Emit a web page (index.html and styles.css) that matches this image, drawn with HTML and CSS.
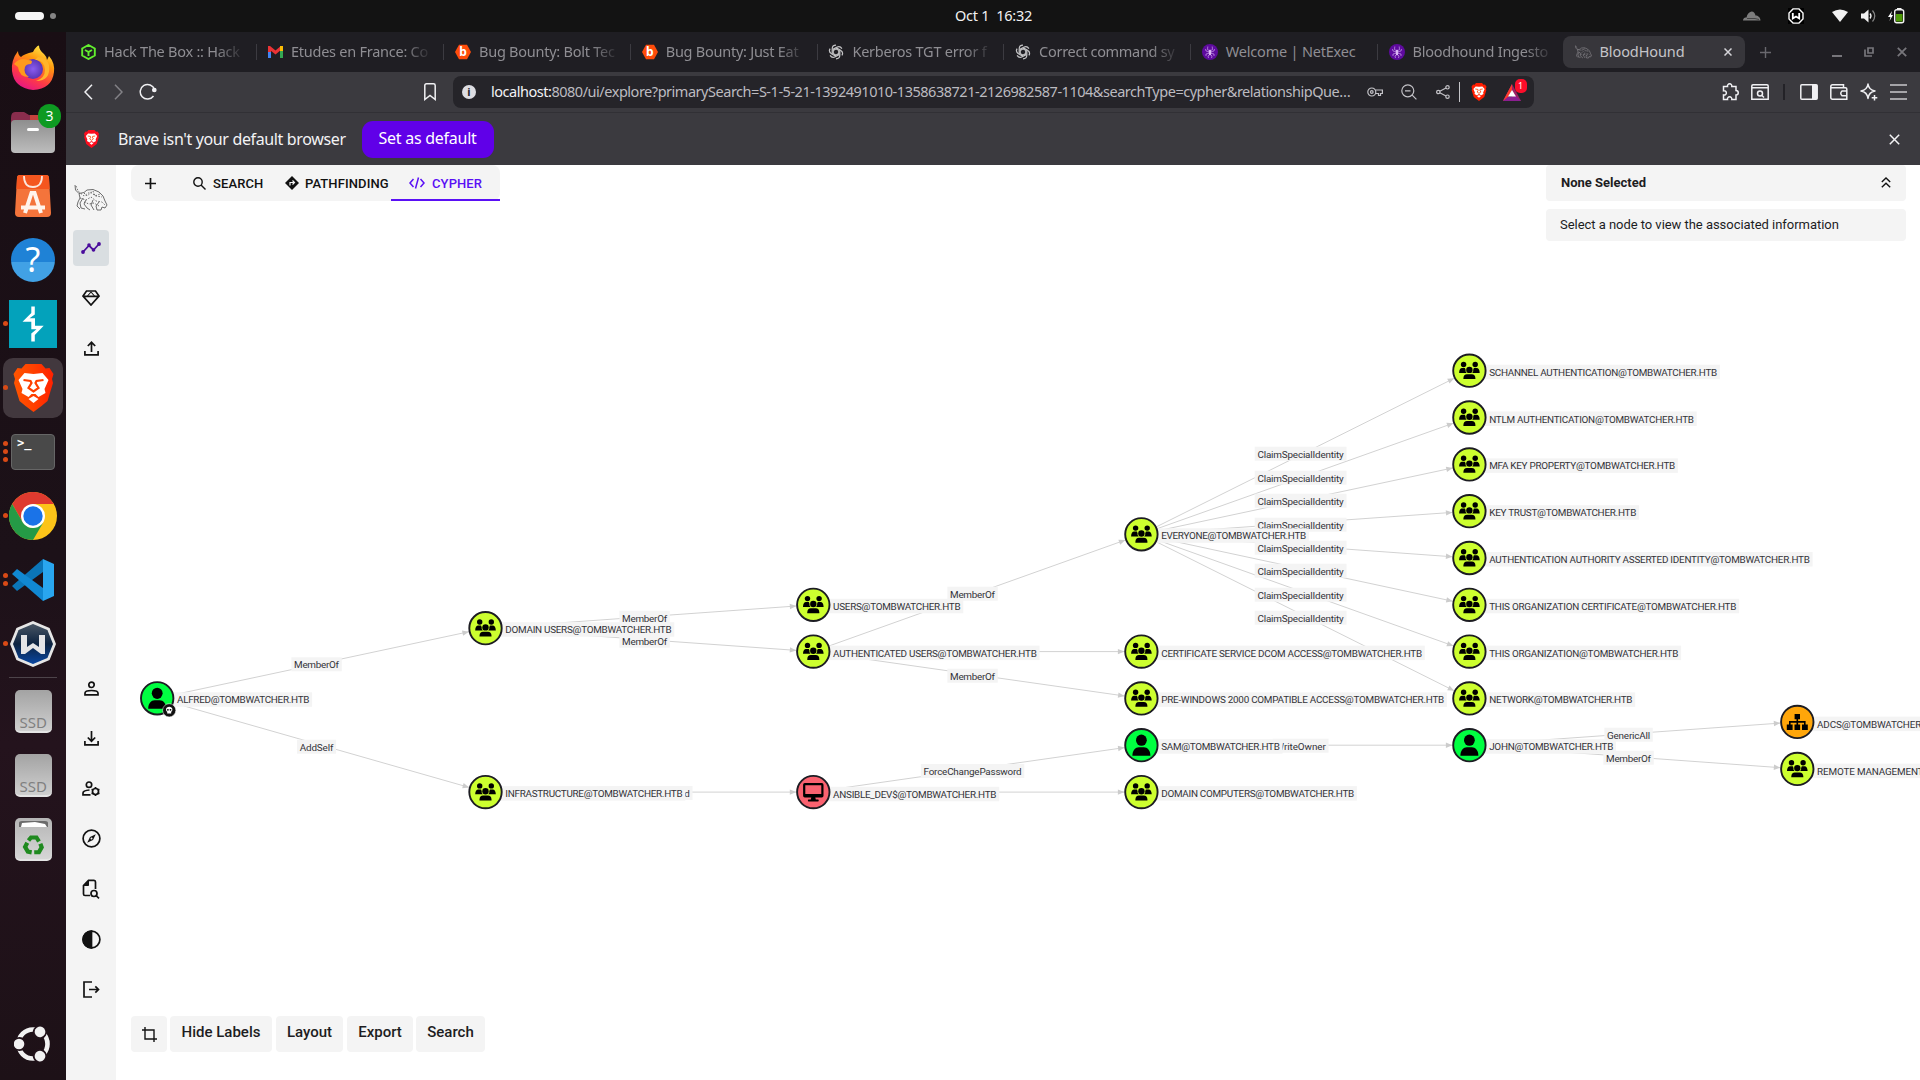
FILE: index.html
```
<!DOCTYPE html>
<html lang="en">
<head>
<meta charset="utf-8">
<title>BloodHound</title>
<link rel="stylesheet" href="styles.css">
</head>
<body>
<svg class="defs" width="0" height="0">
  <defs>
    <linearGradient id="ffBody" x1="0.8" y1="0" x2="0.3" y2="1"><stop offset="0" stop-color="#fff44f"/><stop offset=".35" stop-color="#ff980e"/><stop offset=".7" stop-color="#ff3b45"/><stop offset="1" stop-color="#e31587"/></linearGradient>
    <radialGradient id="ffGlobe"><stop offset="0" stop-color="#8a5cf0"/><stop offset="1" stop-color="#5a35b5"/></radialGradient>
    <linearGradient id="grey" x1="0" y1="0" x2="0" y2="1"><stop offset="0" stop-color="#8e8e8e"/><stop offset="1" stop-color="#bdbdbd"/></linearGradient>
    <linearGradient id="brave" x1="0" y1="0" x2="1" y2="0"><stop offset="0" stop-color="#ff5500"/><stop offset=".5" stop-color="#ff4000"/><stop offset="1" stop-color="#ff2000"/></linearGradient>
    <linearGradient id="wind" x1="0" y1="0" x2="0" y2="1"><stop offset="0" stop-color="#4c5866"/><stop offset=".5" stop-color="#0d2340"/><stop offset="1" stop-color="#0848a8"/></linearGradient>
    <symbol id="lion" viewBox="0 0 40 48"><path d="M12 0H28L32 4.500L36 4L40 10L38.500 15L39.500 19L34 37L28 42L20 48L12 42L6 37L.5 19L1.500 15L0 10L4 4L8 4.500Z"/><path class="face" d="M11 9L20 10L29 9L35 16L31 25L32 29L25 33L22 30H18L15 33L8 29L9 25L5 16ZM15 35L20 32L25 35L20 39Z"/><path class="mane" d="M10 16L17 17L18 19L15 24L20 27.500L25 24L22 19L23 17L30 16" /></symbol>
    <symbol id="hound" viewBox="0 0 34 28"><g fill="none" stroke="currentColor" stroke-width=".8"><path d="M1 1L1.500 6L5 9.500L10 8.500L13 6L19 5.500L25 8L29 12L31 17L33 21L31 24L28 23L27 26L23 26M5 9.500L6 14L4 18L3 22L6 25M9 14L6 19L7 24L11 25M12 16L10 20L13 24L16 26M19 16L17 21L20 26M25 18L22 22L23 26"/><path stroke-dasharray="1.500 1.500" d="M2 2L4 7L10 12L16 8L22 12L28 13M6 14L12 16L17 13L22 17L28 18L31 21M10 9L13 12L19 7L21 12L26 10M10 18L15 20L20 19L25 22"/></g></symbol>
    <symbol id="gpt" viewBox="0 0 16 16"><g fill="none" stroke="#c4c4c6" stroke-width="1.200"><path id="petal" d="M8 1.200C4.800 1.200 4.200 3.600 4.200 5V9L8 11.200"/><use href="#petal" transform="rotate(60 8 8)"/><use href="#petal" transform="rotate(120 8 8)"/><use href="#petal" transform="rotate(180 8 8)"/><use href="#petal" transform="rotate(240 8 8)"/><use href="#petal" transform="rotate(300 8 8)"/></g></symbol>
    <symbol id="spider" viewBox="0 0 16 16"><circle cx="8" cy="8" r="8" fill="#5e0a9e"/><ellipse cx="8" cy="8.500" rx="1.300" ry="3" fill="#dcb8f5"/><path d="M8 7L5.500 5.500L5.800 2.500M8 7L10.500 5.500L10.200 2.500M8 8L4 7L3.500 5M8 8L12 7L12.500 5M8 9L4 10L4 12M8 9L12 10L12 12M8 10L6 12L6.500 14M8 10L10 12L9.500 14" fill="none" stroke="#dcb8f5" stroke-width=".6"/></symbol>
    <symbol id="hex" viewBox="0 0 16 16"><path d="M4 .8H12L16 8L12 15.200H4L0 8Z" fill="#ff4c0a"/></symbol>
  </defs>
</svg>

<div class="desktop">
  <header class="topbar">
    <div class="workspaces"><i class="pill"></i><i class="dot"></i></div>
    <div class="clock">Oct 1&nbsp; 16:32</div>
    <div class="tray">
      <svg width="18" height="12" viewBox="0 0 18 12"><path d="M0 10.500C0 8 2 7.500 3.500 7.500C4 4 6 2 8.500 1.500C11 1.500 12 3.500 12.500 5.500C15 5.500 17.500 7.500 17.500 10.500Z" fill="#7d7d7d"/><path d="M4 8.500H12L16 9.500" stroke="#444" fill="none"/></svg>
      <svg class="t-w" width="16" height="16" viewBox="0 0 16 16"><rect width="16" height="16" fill="#000"/><path d="M5 .9H11L15 5V11L11 15.100H5L1 11V5Z" fill="none" stroke="#fff" stroke-width="1.400"/><path d="M4.800 5V10.500L8 8.500L11.200 10.500V5" fill="none" stroke="#fff" stroke-width="1.800"/></svg>
      <svg class="t-wifi" width="16" height="14" viewBox="0 0 16 14"><path d="M0 3Q8-2 16 3L8 13Z" fill="#f2f2f2"/></svg>
      <svg class="t-vol" width="16" height="14" viewBox="0 0 16 14"><path d="M0 4.500H3L7.500.5V13.500L3 9.500H0Z" fill="#f2f2f2"/><path d="M9 4.500Q11 7 9 9.500" fill="none" stroke="#f2f2f2" stroke-width="1.300"/><path d="M11.500 1.500Q16 7 11.500 12.500" fill="none" stroke="#888" stroke-width="1.200"/></svg>
      <svg class="t-bat" width="17" height="16" viewBox="0 0 17 16"><path d="M4 3L0 9H2.500L1.500 13L5 7H3Z" fill="#fff"/><rect x="6.700" y="1.700" width="9" height="13" rx="2" fill="none" stroke="#f2f2f2" stroke-width="1.400"/><rect x="9" y="0" width="4.500" height="2" fill="#f2f2f2"/><rect x="8" y="6" width="6.500" height="7.500" fill="#4e9a06"/></svg>
    </div>
  </header>

  <div class="work">
    <nav class="dock">
      <div class="slot"><svg width="44" height="46" viewBox="0 0 44 46"><path d="M22 7Q25 1 28 .5Q28 5 33 9Q36 12 36 15L38 11Q44 18 43 27Q41 44 22 45Q3 43 1 26Q0 15 7 6Q7 10 10 12Q13 9 22 7Z" fill="url(#ffBody)"/><circle cx="22" cy="24" r="10" fill="url(#ffGlobe)"/><path d="M3 19Q9 12 17 15Q23 15 20 19Q15 19 14 22Q12 28 18 32Q8 32 7 22Z" fill="#ff9a1c"/><path d="M24 15Q33 14 34 25Q34 33 25 36Q40 36 38 20Q35 12 27 12Z" fill="#ffb52b"/></svg></div>
      <div class="slot"><svg width="46" height="44" viewBox="0 0 46 44"><path d="M1 8Q1 2 5 2H14L19 5H38Q43 5 43 10V20H1Z" fill="#8a2d4d"/><path d="M20 5H38V12H20Z" fill="#c4423c"/><rect x="1" y="10" width="44" height="33" rx="4" fill="url(#grey)"/><rect x="17" y="18" width="12" height="3" rx="1.500" fill="#fff"/></svg><b class="badge">3</b></div>
      <div class="slot"><svg width="36" height="42" viewBox="0 0 36 42"><path d="M5 0H31Q34 0 34 3L36 38Q36 42 32 42H4Q0 42 0 38L2 3Q2 0 5 0Z" fill="#f4743b"/><path d="M5 0H31Q34 0 34 3L34.600 14H1.400L2 3Q2 0 5 0Z" fill="#f4561f"/><path d="M9 1Q9 12 18 12Q27 12 27 1" fill="none" stroke="#fbe6dc" stroke-width="1.800"/><path d="M10 38L16.500 18H19.500L26 38M6 32.500H30" fill="none" stroke="#fff4ec" stroke-width="4"/></svg></div>
      <div class="slot"><div class="help">?</div></div>
      <div class="slot r1"><svg width="48" height="48" viewBox="0 0 48 48"><rect width="48" height="48" fill="#03a2bb"/><path d="M22.300 6.500H25.800V14.500L20.500 18.300H26V25.700H34.700L25.800 35V41.500H22.300V33.500L27.500 29.200H22.300V21.700H13.500L22.300 13Z" fill="#fff"/></svg></div>
      <div class="slot r1"><div class="running"><svg class="lion" width="41" height="48"><use href="#lion"/></svg></div></div>
      <div class="slot r3"><i class="mid"></i><div class="term">&gt;_</div></div>
      <div class="slot r1"><svg width="48" height="48" viewBox="0 0 48 48"><circle cx="24" cy="24" r="24" fill="#fcc419"/><path d="M3.200 12A24 24 0 0 1 44.800 12H24L13.600 30Z" fill="#df3a2f"/><path d="M3.200 12L13.600 30Q18 36 24 36L34 31L24 48A24 24 0 0 1 3.200 12Z" fill="#259a46"/><circle cx="24" cy="24" r="12" fill="#fff"/><circle cx="24" cy="24" r="9.700" fill="#1a73e8"/></svg></div>
      <div class="slot r2"><svg width="42" height="42" viewBox="0 0 42 42"><path d="M31 0L42 5V37L31 42Z" fill="#29a6ef"/><path d="M0 27L31 0V13L5 32Z" fill="#0b75b8"/><path d="M5 10L31 29V42L0 15Z" fill="#1188d2"/></svg></div>
      <div class="slot r1"><svg width="46" height="46" viewBox="0 0 46 46"><path d="M23 1.500L38.500 8L44.500 23L38.500 38L23 44.500L7.500 38L1.500 23L7.500 8Z" fill="url(#wind)" stroke="#e6e6e6" stroke-width="2.800"/><path d="M11 14H17V26L23 22L29 26V14H35V33H31L23 27L15 33H11Z" fill="#e4e4e6"/></svg></div>
      <hr>
      <div class="slot"><div class="disk">SSD</div></div>
      <div class="slot"><div class="disk">SSD</div></div>
      <div class="slot"><div class="disk trash"><svg width="37" height="43" viewBox="0 0 37 43"><path d="M4 9V5Q4 3 7 3H30Q33 3 33 5V9Z" fill="#6b6b6b"/><path d="M6 9L7 5L20 4L30 6L32 9Z" fill="#fff"/><g fill="none" stroke="#1f8a1f" stroke-width="4.200"><path d="M13.500 22.500L16 19.500H21.500L24 23.500"/><path d="M13.500 22.500L16 19.500H21.500L24 23.500" transform="rotate(120 18.500 27.500)"/><path d="M13.500 22.500L16 19.500H21.500L24 23.500" transform="rotate(240 18.500 27.500)"/></g></svg></div></div>
      <div class="slot last"><svg width="38" height="36" viewBox="-19 -18 38 36"><circle r="14.500" fill="none" stroke="#f2f2f2" stroke-width="4.600"/><g id="friend"><circle cx="-13.500" r="7" fill="#21121a"/><circle cx="-14" r="5.300" fill="#f2f2f2"/></g><use href="#friend" transform="rotate(120)"/><use href="#friend" transform="rotate(240)"/></svg></div>
    </nav>

    <main class="browser">
      <div class="tabs">
        <div class="tab"><svg width="15" height="16" viewBox="0 0 15 16"><path d="M7.500 1L13.800 4.500V11.500L7.500 15L1.200 11.500V4.500ZM4 6L7.500 8L11 6M7.500 8V12" fill="none" stroke="#62ef2e" stroke-width="1.900"/></svg><span>Hack The Box :: Hack</span></div>
        <div class="tab"><svg width="15" height="12" viewBox="0 0 15 12"><path d="M1.500 12V2" stroke="#4285f4" stroke-width="3"/><path d="M13.500 12V2" stroke="#34a853" stroke-width="3"/><path d="M1.500 6V1.500L7.500 6.500L13.500 1.500" fill="none" stroke="#ea3335" stroke-width="3"/><path d="M13.500 5V0" stroke="#fbbc04" stroke-width="3"/></svg><span>Etudes en France: Co</span></div>
        <div class="tab"><i class="hexed"><svg width="16" height="16"><use href="#hex"/></svg><b>b</b></i><span>Bug Bounty: Bolt Tec</span></div>
        <div class="tab"><i class="hexed"><svg width="16" height="16"><use href="#hex"/></svg><b>b</b></i><span>Bug Bounty: Just Eat</span></div>
        <div class="tab"><svg width="16" height="16"><use href="#gpt"/></svg><span>Kerberos TGT error f</span></div>
        <div class="tab"><svg width="16" height="16"><use href="#gpt"/></svg><span class="tight">Correct command sy</span></div>
        <div class="tab"><svg width="16" height="16"><use href="#spider"/></svg><span class="full">Welcome | NetExec</span></div>
        <div class="tab nosep"><svg width="16" height="16"><use href="#spider"/></svg><span>Bloodhound Ingesto</span></div>
        <div class="tab active"><svg class="hd" width="17" height="20"><use href="#hound"/></svg><span class="full">BloodHound</span><svg class="x" width="8" height="8" viewBox="0 0 8 8"><path d="M.5.5L7.500 7.500M7.500.5L.5 7.500"/></svg></div>
        <svg class="plus" width="11" height="11" viewBox="0 0 11 11"><path d="M5.500 0V11M0 5.500H11"/></svg>
        <div class="winctl">
          <svg width="10" height="10" viewBox="0 0 10 10"><path d="M0 9H10" stroke-width="2"/></svg>
          <svg width="10" height="10" viewBox="0 0 10 10"><path d="M4 1H9V6H4ZM1 2.500V9H8" stroke-width="1.700"/></svg>
          <svg width="10" height="10" viewBox="0 0 10 10"><path d="M.8.8L9.200 9.200M9.200.8L.8 9.200" stroke-width="1.800"/></svg>
        </div>
      </div>

      <div class="toolbar">
        <svg class="ic" width="9" height="16" viewBox="0 0 9 16"><path d="M8 .8L1 8L8 15.200"/></svg>
        <svg class="ic fwd" width="9" height="16" viewBox="0 0 9 16"><path d="M1 .8L8 8L1 15.200"/></svg>
        <svg class="ic reload" width="18" height="18" viewBox="0 0 18 18"><path d="M14.500 13A7.300 7.300 0 1 1 15.500 6.500"/><circle cx="15.300" cy="7" r="1.600" fill="#f0f0f3"/></svg>
        <svg class="ic mark" width="12" height="18" viewBox="0 0 12 18"><path d="M.8 2.500Q.8.8 2.500.8H9.500Q11.200.8 11.200 2.500V16.500L6 12.500L.8 16.500Z"/></svg>
        <div class="url">
          <i class="info">i</i>
          <span class="addr"><em>localhost:</em>8080/ui/explore?primarySearch=S-1-5-21-1392491010-1358638721-2126982587-1104&amp;searchType=cypher&amp;relationshipQue…</span>
          <svg class="u" width="16" height="10" viewBox="0 0 16 10"><circle cx="4.800" cy="5" r="4"/><circle cx="4.800" cy="5" r="1.300"/><path d="M8.500 3H15.400V6.500H13.500V8.500H11.500V6.500H8.500"/></svg>
          <svg class="u zoom" width="16" height="16" viewBox="0 0 16 16"><circle cx="6.800" cy="6.800" r="6"/><path d="M11.200 11.200L15.400 15.400M4 6.800H9.500"/></svg>
          <svg class="u share" width="14" height="14" viewBox="0 0 14 14"><circle cx="2.300" cy="7" r="1.700"/><circle cx="11.500" cy="2.300" r="1.700"/><circle cx="11.500" cy="11.700" r="1.700"/><path d="M3.800 6.200L10 3M3.800 7.800L10 11"/></svg>
          <i class="bar"></i>
          <svg class="lion small" width="16" height="18"><use href="#lion"/></svg>
          <div class="bat"><svg width="18" height="17" viewBox="0 0 18 17"><path d="M9 0L18 17H9Z" fill="#9c1f63"/><path d="M9 0L0 17H18L13 12L5 13L9 5Z" fill="#8b1f90"/><path d="M9 0L0 17L6 12L9 6Z" fill="#ff3b2a"/><path d="M9 6L13 12.500H5Z" fill="#fff"/></svg><b>1</b></div>
        </div>
        <svg class="ic puzzle" width="18" height="18" viewBox="0 0 18 18"><path d="M1.500 3.500H5.500A2.200 2.200 0 1 1 9.800 3.500H14V7.500A2.200 2.200 0 1 1 14 12V16.500H9.800A2.200 2.200 0 1 0 5.500 16.500H1.500V12A2.200 2.200 0 1 0 1.500 7.800Z"/></svg>
        <svg class="ic g1" width="18" height="16" viewBox="0 0 18 16"><path d="M2 .8H16Q17.200.8 17.200 2V15.200H.8V2Q.8.8 2 .8ZM.8 3.800H17.200M11 11.500L13 13.500"/><circle cx="9" cy="9.500" r="2.500"/></svg>
        <i class="div"></i>
        <svg class="ic" width="18" height="16" viewBox="0 0 18 16"><rect x=".8" y=".8" width="16.400" height="14.400" rx="1"/><rect x="12" y="1" width="5" height="14" fill="#f0f0f3" stroke="none"/></svg>
        <svg class="ic g2" width="18" height="16" viewBox="0 0 18 16"><path d="M.8 2.500Q.8.8 2.500.8H13.500V3.500M.8 2.500Q.8 3.800 2.500 3.800H15.500Q16.800 3.800 16.800 5V15.200H2.500Q.8 15.200.8 13.500ZM16.800 7H12Q9.500 9.300 12 11.800H16.800"/></svg>
        <svg class="ic g3" width="18" height="18" viewBox="0 0 18 18"><path d="M8 1Q8.800 7 15 8Q8.800 9 8 15.500Q7.200 9 1 8Q7.200 7 8 1ZM14.500 12V17.500M11.700 14.700H17.300" stroke-linejoin="round"/></svg>
        <svg class="ic g4" width="17" height="16" viewBox="0 0 17 16"><path d="M0 1H17M0 8H17M0 15H17"/></svg>
      </div>

      <div class="infobar">
        <svg class="lion red" width="15" height="18"><use href="#lion"/></svg>
        <span class="msg">Brave isn't your default browser</span>
        <button class="setdef">Set as default</button>
        <svg class="close" width="11" height="11" viewBox="0 0 11 11"><path d="M.8.8L10.200 10.200M10.200.8L.8 10.200"/></svg>
      </div>

      <div class="page">
        <aside class="side">
          <div class="cell"><svg width="34" height="28"><use href="#hound"/></svg></div>
          <div class="cell"><div class="on"><svg width="20" height="12" viewBox="0 0 20 12"><path d="M2 10L8 3.500L12.500 8L18 2" fill="none" stroke="#4a0c9c" stroke-width="1.800"/><g fill="#4a0c9c"><circle cx="2" cy="10" r="1.900"/><circle cx="8" cy="3" r="1.800"/><circle cx="12.500" cy="8" r="1.800"/><circle cx="18" cy="2" r="1.900"/></g></svg></div></div>
          <div class="cell"><svg class="s" width="18" height="16" viewBox="0 0 18 16"><path d="M4.500 1H13.500L17 6L9 15L1 6ZM1 6.300H17"/><path stroke-width="1.100" d="M5.500 6L9 2L12.500 6"/></svg></div>
          <div class="cell"><svg class="s" width="15" height="15" viewBox="0 0 15 15"><path d="M.9 10V13.900H14.100V10M7.500 11V1.500M3.800 5L7.500 1.300L11.200 5"/></svg></div>
          <div class="cell low"><svg class="s" width="15" height="15" viewBox="0 0 15 15"><circle cx="7.500" cy="3.800" r="2.700"/><path d="M1 13.800V12Q1 9.500 7.500 9.500Q14 9.500 14 12V13.800Z"/></svg></div>
          <div class="cell"><svg class="s" width="15" height="15" viewBox="0 0 15 15"><path d="M.9 10V13.900H14.100V10M7.500 0V10M3.800 6.500L7.500 10.200L11.200 6.500"/></svg></div>
          <div class="cell"><svg class="s" width="18" height="15" viewBox="0 0 18 15"><circle cx="7" cy="3.700" r="2.700"/><path d="M8.500 13.900H1V12Q1 9.500 7.500 9"/><circle cx="13.500" cy="10.500" r="3"/><path d="M13.500 6V7.500M13.500 13.500V15M9.600 8.300L11 9M16 12L17.400 12.700M17.400 8.300L16 9M11 12L9.600 12.700"/></svg></div>
          <div class="cell"><svg class="s" width="19" height="19" viewBox="0 0 19 19"><circle cx="9.500" cy="9.500" r="8.400"/><path d="M13.800 5.200L11 11L5.200 13.800L8 8Z" fill="#121212" stroke="none"/><circle cx="9.500" cy="9.500" r="1" fill="#f4f4f4" stroke="none"/></svg></div>
          <div class="cell"><svg class="s" width="18" height="20" viewBox="0 0 18 20"><path d="M8 16.500H3Q1.500 16.500 1.500 15V6.500L6.500 1.300H12Q13.500 1.300 13.500 3V10"/><path d="M2 6.500L6.500 2V6.500Z" fill="#121212" stroke-width="1"/><circle cx="12" cy="14.500" r="3"/><path d="M14 16.500L17 19.300"/></svg></div>
          <div class="cell"><svg class="s" width="19" height="19" viewBox="0 0 19 19"><circle cx="9.500" cy="9.500" r="8.400"/><path d="M9.500 1A8.500 8.500 0 0 0 9.500 18Z" fill="#121212"/></svg></div>
          <div class="cell"><svg class="s" width="17" height="17" viewBox="0 0 17 17"><path d="M9 1H1V16H9M6 8.500H15.500M12.300 5.300L15.500 8.500L12.300 11.700"/></svg></div>
        </aside>

        <section class="explore">
          <svg id="graph" class="graph" viewBox="116 165 1804 915" width="1804" height="915"></svg>
          <div class="head">
            <div class="modes">
              <svg class="s" width="11" height="11" viewBox="0 0 11 11"><path d="M5.500 0V11M0 5.500H11"/></svg>
              <span class="mode m1"><svg class="s thin" width="13" height="13" viewBox="0 0 13 13"><circle cx="5" cy="5" r="4.200"/><path d="M8 8L12.500 12.500"/></svg>SEARCH</span>
              <span class="mode m2"><svg width="14" height="14" viewBox="0 0 14 14"><path d="M7 0L14 7L7 14L0 7Z" fill="#111"/><path d="M5 9.500V6.500H9M7.500 4.500L9.500 6.500L7.500 8.500" fill="none" stroke="#f4f4f4" stroke-width="1.200"/></svg>PATHFINDING</span>
              <span class="mode m3"><svg width="16" height="12" viewBox="0 0 16 12"><path d="M4.500 2L1 6L4.500 10M11.500 2L15 6L11.500 10M9.500.5L6.500 11.500" fill="none" stroke="#5a10f5" stroke-width="1.500"/></svg>CYPHER</span>
            </div>
            <div class="inspect">
              <div class="panel title"><b>None Selected</b><svg class="s thin" width="10" height="11" viewBox="0 0 10 11"><path d="M.8 5L5 1L9.200 5M.8 10.300L5 6.300L9.200 10.300"/></svg></div>
              <div class="panel note">Select a node to view the associated information</div>
            </div>
          </div>
          <div class="controls">
            <button class="crop"><svg class="s thin" width="15" height="15" viewBox="0 0 15 15"><path d="M0 3H12V15M3 0V12H15"/></svg></button><button>Hide Labels</button><button class="c3">Layout</button><button class="c4">Export</button><button class="c5">Search</button>
          </div>
        </section>
      </div>
    </main>
  </div>
</div>
<script src="graph.js"></script>
</body>
</html>
```
FILE: styles.css
```
* { box-sizing: border-box; }
body { margin: 0; width: 1920px; height: 1080px; overflow: hidden; background: #fff; font-family: Roboto, "Liberation Sans", sans-serif; }
.defs { position: absolute; }
svg { display: block; flex: none; }
button { border: 0; font: inherit; }
i, em { font-style: normal; }

.desktop { display: flex; flex-direction: column; height: 1080px; }
.topbar { height: 32px; background: #131313; color: #f2f2f2; display: grid; grid-template-columns: 1fr auto 1fr; align-items: center; font: 14.5px "Noto Sans", sans-serif; }
.workspaces { display: flex; align-items: center; gap: 6px; padding-left: 15px; }
.pill { width: 29px; height: 8px; border-radius: 4px; background: #f6f6f6; }
.dot { width: 6px; height: 6px; border-radius: 3px; background: #858585; }
.clock { position: relative; left: 33.500px; margin-top: -3px; letter-spacing: -.25px; }
.tray { display: flex; align-items: center; justify-content: flex-end; padding-right: 15px; }
.t-w { margin-left: 27px; }
.t-wifi { margin-left: 28px; }
.t-vol { margin-left: 13px; }
.t-bat { margin-left: 11px; }

.work { flex: 1; display: flex; min-height: 0; }
.dock { width: 66px; background: linear-gradient(#190e14, #1c1118 50%, #24131d 68%, #1d1117); padding: 4px 0 4px; display: flex; flex-direction: column; }
.slot { height: 64px; flex: none; display: flex; align-items: center; justify-content: center; position: relative; }
.slot.last { margin-top: auto; padding-right: 1px; }
.dock hr { width: 48px; height: 1px; margin: 1px auto; border: 0; background: #4d444a; }
.badge { position: absolute; left: 38px; top: 4px; width: 23px; height: 24px; border-radius: 12px; background: #0e9a22; color: #fff; font: 14px/24px "Noto Sans", sans-serif; text-align: center; }
.r1::before, .r2::before, .r3::before, .r2::after, .r3::after, .mid { content: ""; position: absolute; left: 3px; top: 29px; width: 5px; height: 5px; border-radius: 3px; background: #d94a16; }
.r2::before { top: 25px; }
.r2::after { top: 33px; }
.r3::before { top: 21px; }
.r3::after { top: 37px; }
.help { width: 44px; height: 44px; border-radius: 22px; background: linear-gradient(#1f82d6 55%, #41a1e5 55%); color: #fff; font: 34px/42px "Noto Sans", sans-serif; text-align: center; }
.running { width: 60px; height: 60px; border-radius: 10px; background: #42383e; display: flex; align-items: center; justify-content: center; }
.slot.r1:has(.running)::before { z-index: 1; }
.lion { fill: url(#brave); }
.face { fill: #fff; }
.mane { fill: none; stroke: #ff4000; stroke-width: 2.200; }
.lion.red { fill: #fb0d1e; }
.lion.small { fill: #ff1d00; margin-left: 11px; }
.term { width: 44px; height: 36px; border-radius: 4px; background: #494949; border: 1px solid #666; color: #fff; font: bold 12px/16px "DejaVu Sans Mono", monospace; padding-left: 5px; }
.disk { width: 37px; height: 43px; border-radius: 5px; background: linear-gradient(#a3a3a3, #cfcfcf); border-bottom: 2px solid #e4e4e4; color: #808080; font: 15px/20px "Noto Sans", sans-serif; padding: 22px 0 0 5px; overflow: hidden; }
.trash { padding: 0; background: linear-gradient(#b5b5b5, #d6d6d6); }

.browser { flex: 1; display: flex; flex-direction: column; min-width: 0; }
.tabs { height: 40px; background: #1f1e23; display: flex; align-items: center; color: #8f8e93; font: 14.5px "Noto Sans", sans-serif; padding-left: 3px; }
.tab { width: 187px; height: 32px; flex: none; display: flex; align-items: center; padding-left: 12px; gap: 8px; position: relative; }
.tab::after { content: ""; position: absolute; right: -1px; top: 8px; height: 16px; width: 1px; background: #3c3b41; }
.nosep::after, .active::after { display: none; }
.tab span { width: 140px; white-space: nowrap; letter-spacing: -.25px; margin-top: -2px; -webkit-mask-image: linear-gradient(90deg, #000 112px, transparent 142px); mask-image: linear-gradient(90deg, #000 112px, transparent 142px); }
.tab span.tight { letter-spacing: -.3px; }
.tab span.full { -webkit-mask-image: none; mask-image: none; letter-spacing: -.2px; }
.tab:nth-child(n+4) { margin-left: -.3px; }
.hexed { position: relative; width: 16px; height: 16px; }
.hexed b { position: absolute; inset: 0; color: #fff; font: bold 12px/15px "Noto Sans", sans-serif; text-align: center; }
.tab.active { width: 182px; margin-left: -1px; background: #37363b; border-radius: 8px; color: #c5c4c9; }
.tab.active span { width: 111px; letter-spacing: -.1px; }
.hd { color: #b5b4b8; }
.tab .x { stroke: #d5d5d9; stroke-width: 1.500; margin-left: 5px; }
.plus { stroke: #69686e; stroke-width: 1.400; margin-left: 15px; }
.winctl { display: flex; gap: 22.5px; margin-left: auto; padding-right: 13.500px; }
.winctl svg { fill: none; stroke: #77767b; }

.toolbar { height: 41px; background: #3b3a3f; border-bottom: 1px solid #313035; display: flex; align-items: center; padding: 0 13px 0 18px; }
.ic { fill: none; stroke: #f0f0f3; stroke-width: 1.500; }
.fwd { margin-left: 21px; stroke: #838287; }
.reload { margin-left: 16px; }
.mark { margin-left: 267px; }
.url { width: 1080.500px; flex: none; height: 32px; margin-left: 17px; border-radius: 8px; background: #252429; display: flex; align-items: center; padding-left: 9px; color: #bcbbc0; font: 14.5px "Noto Sans", sans-serif; }
.info { width: 14px; height: 14px; border-radius: 7px; background: #dddde2; color: #252429; font: bold 11px/14px "Noto Sans", sans-serif; text-align: center; }
.addr { width: 860px; flex: none; margin: -3px 0 0 15px; white-space: nowrap; letter-spacing: -.475px; }
.addr em { color: #f2f2f5; }
.u { fill: none; stroke: #c3c2c7; stroke-width: 1.200; margin-left: 15.500px; }
.zoom { margin-left: 18px; }
.share { margin-left: 19px; }
.bar { width: 1px; height: 20px; background: #c5c5c9; margin-left: 9px; }
.bat { position: relative; margin-left: 16px; }
.bat b { position: absolute; left: 12px; top: -5px; width: 12px; height: 14px; border-radius: 5px; background: #fb0d2a; color: #fff; font: 9px/14px "Noto Sans", sans-serif; text-align: center; }
.puzzle { margin-left: auto; }
.g1 { margin-left: 11.500px; }
.div { width: 2px; height: 16px; background: #232227; margin: 0 14.500px 0 14px; }
.g2 { margin-left: 12px; }
.g3 { margin-left: 12.500px; }
.g4 { margin-left: 12px; stroke: #c9c8cc; }

.infobar { height: 52px; background: #3b3a3f; display: flex; align-items: center; padding: 0 20.500px 0 18px; color: #f3f3f5; font: 16px "Noto Sans", sans-serif; }
.msg { width: 243.500px; margin: -1px 0 0 19px; white-space: nowrap; letter-spacing: -.36px; }
.setdef { width: 132px; height: 37px; border-radius: 11px; background: #6000e8; color: #fff; padding: 0 0 3px; letter-spacing: -.25px; white-space: nowrap; }
.close { margin-left: auto; stroke: #f3f3f5; stroke-width: 1.500; }

.page { flex: 1; display: flex; min-height: 0; }
.side { width: 50px; background: #f4f4f4; padding: 7.500px 0 65px; display: flex; flex-direction: column; color: #4a4a4a; }
.cell { height: 50.300px; flex: none; display: flex; align-items: center; justify-content: center; }
.cell.low { margin-top: auto; }
.on { width: 36px; height: 36px; border-radius: 4px; background: #d9dee1; display: flex; align-items: center; justify-content: center; }
.s { fill: none; stroke: #121212; stroke-width: 1.700; }
.thin { stroke-width: 1.400; }

.explore { flex: 1; position: relative; display: flex; flex-direction: column; justify-content: space-between; }
.graph { position: absolute; left: 0; top: 0; }
.graph text { font: 9.9px Roboto, sans-serif; fill: #333338; }
.head { display: flex; justify-content: space-between; padding: 0 14px 0 15px; position: relative; }
.modes { width: 369px; height: 36px; background: #f4f4f4; border-radius: 8px; display: flex; align-items: center; padding-left: 14px; font-weight: 500; font-size: 13px; color: #111; }
.mode { display: flex; align-items: center; letter-spacing: .1px; }
.m1 { margin-left: 37px; gap: 7px; width: 92px; }
.m2 { gap: 6px; width: 106px; }
.m3 { width: 109px; height: 36px; border-bottom: 2px solid #5a10f5; color: #5a10f5; gap: 7px; padding: 2px 0 0 18px; }
.inspect { width: 360px; display: flex; flex-direction: column; gap: 8px; }
.panel { background: #f4f4f4; border-radius: 4px; color: #1d1d1f; padding: 0 15px; display: flex; align-items: center; }
.title { height: 36px; font-size: 13px; justify-content: space-between; padding-bottom: 1px; }
.note { height: 32px; font-size: 13px; padding: 0 0 1px 14px; letter-spacing: -.04px; }
.controls { position: relative; display: flex; padding: 0 0 28px 15px; }
.controls button { height: 36px; border-radius: 4px; background: #f4f4f4; color: #1d1d22; font-weight: 500; font-size: 15px; padding: 0 0 5px; width: 102px; }
.controls .crop { width: 36px; padding: 0 0 0 11px; margin-right: 3px; }
.controls .c3 { width: 67px; margin-left: 4px; }
.controls .c4 { width: 66px; margin-left: 4px; }
.controls .c5 { width: 69px; margin-left: 3px; }
```
FILE: graph.js
```
const D = '@TOMBWATCHER.HTB';
// id: [x, y, kind, label, label width]
const nodes = {
  alfred: [157.2, 698.3, 'user', 'ALFRED' + D, 132.4],
  domusers: [485.5, 628.2, 'group', 'DOMAIN USERS' + D, 166.3],
  infra: [485.5, 792.1, 'group', 'INFRASTRUCTURE' + D, 177.3],
  users: [813.3, 604.8, 'group', 'USERS' + D, 127.5],
  auth: [813.3, 651.6, 'group', 'AUTHENTICATED USERS' + D, 203.7],
  ansible: [813.3, 792.1, 'computer', 'ANSIBLE_DEV$' + D, 163.4],
  everyone: [1141.4, 534.3, 'group', 'EVERYONE' + D, 145],
  cert: [1141.4, 651.6, 'group', 'CERTIFICATE SERVICE DCOM ACCESS' + D, 260.9],
  pre: [1141.4, 698.4, 'group', 'PRE-WINDOWS 2000 COMPATIBLE ACCESS' + D, 283],
  sam: [1141.4, 745.2, 'user', 'SAM' + D, 118.6],
  domcomp: [1141.4, 792.1, 'group', 'DOMAIN COMPUTERS' + D, 193],
  schannel: [1469.4, 370.7, 'group', 'SCHANNEL AUTHENTICATION' + D, 228],
  ntlm: [1469.4, 417.5, 'group', 'NTLM AUTHENTICATION' + D, 204.8],
  mfa: [1469.4, 464.4, 'group', 'MFA KEY PROPERTY' + D, 186],
  key: [1469.4, 511.2, 'group', 'KEY TRUST' + D, 147.2],
  authority: [1469.4, 558, 'group', 'AUTHENTICATION AUTHORITY ASSERTED IDENTITY' + D, 320.7],
  orgcert: [1469.4, 604.8, 'group', 'THIS ORGANIZATION CERTIFICATE' + D, 247.2],
  org: [1469.4, 651.6, 'group', 'THIS ORGANIZATION' + D, 189.2],
  network: [1469.4, 698.4, 'group', 'NETWORK' + D, 143.3],
  john: [1469.4, 745.2, 'user', 'JOHN' + D, 124.1],
  adcs: [1797.3, 721.9, 'ou', 'ADCS' + D, 125],
  remote: [1797.3, 768.9, 'group', 'REMOTE MANAGEMENT USERS' + D, 238]
};
// from, to, label, label centre y, label width
const C = 'ClaimSpecialIdentity';
const edges = [
  ['alfred', 'domusers', 'MemberOf', 664.3, 45], ['alfred', 'infra', 'AddSelf', 746.7, 33.7],
  ['domusers', 'users', 'MemberOf', 617.7, 45], ['domusers', 'auth', 'MemberOf', 640.7, 45],
  ['infra', 'ansible', 'ReadGMSAPassword', 793, 90.4],
  ['auth', 'everyone', 'MemberOf', 593.7, 45], ['auth', 'cert', '', 652, 0], ['auth', 'pre', 'MemberOf', 675.7, 45],
  ['ansible', 'sam', 'ForceChangePassword', 771, 98], ['ansible', 'domcomp', '', 793, 0],
  ['sam', 'john', 'WriteOwner', 745.7, 50.5],
  ['everyone', 'schannel', C, 453.7, 86.4], ['everyone', 'ntlm', C, 477.7, 86.4], ['everyone', 'mfa', C, 500.7, 86.4],
  ['everyone', 'key', C, 524.7, 86.4], ['everyone', 'authority', C, 547.7, 86.4], ['everyone', 'orgcert', C, 570.7, 86.4],
  ['everyone', 'org', C, 594.7, 86.4], ['everyone', 'network', C, 617.7, 86.4],
  ['john', 'adcs', 'GenericAll', 734.7, 43], ['john', 'remote', 'MemberOf', 757.7, 45]
];
const fills = { user: '#00ff41', group: '#cdff2f', computer: '#fa6270', ou: '#ffa60a' };
const glyphs = {
  user: '<ellipse cx="0" cy="-5" rx="5.400" ry="5.600"/><path d="M-9 10.500C-9 5-6 2-2.500 2H2.500C6 2 9 5 9 10.500Z"/>',
  group: '<circle cx="-5.800" cy="-6.200" r="2.700"/><circle cx="5.800" cy="-6.200" r="2.700"/><path d="M-10.300 2.200C-10.300-1-9-2.700-7.300-2.700H-4.500L-3.800-1Q-4.300 1-2.800 2.200ZM10.300 2.200C10.300-1 9-2.700 7.300-2.700H4.500L3.800-1Q4.300 1 2.800 2.200Z"/><circle cx="0" cy="-.8" r="3.200"/><path d="M-6 8.400V7.500C-6 5-4.500 3.500-2.500 3.500H2.500C4.500 3.500 6 5 6 7.500V8.400Z"/>',
  computer: '<path fill-rule="evenodd" d="M-8.500-9H8.500Q10.200-9 10.200-7.300V3.700Q10.200 5.400 8.500 5.400H2L2.500 7.500H5Q6 8.500 5 9.500H-5Q-6 8.500-5 7.500H-2.500L-2 5.400H-8.500Q-10.200 5.400-10.200 3.700V-7.300Q-10.200-9-8.500-9ZM-8-6.800V2H8V-6.800Z"/>',
  ou: '<path d="M-2.700-8H2.700V-2.700H.8V-.8H8.300V2.700H10.500V8.200H4.700V2.700H6.700V.8H.8V2.700H2.800V8.200H-2.800V2.700H-.8V.8H-6.700V2.700H-4.700V8.200H-10.500V2.700H-8.300V-.8H-.8V-2.700H-2.700Z"/>'
};
let lines = '', tags = '', labels = '', discs = '';
for (const [a, b, t, y, w] of edges) {
  const [x1, y1] = nodes[a], [x2, y2] = nodes[b];
  const ang = Math.atan2(y2 - y1, x2 - x1), ex = x2 - 17 * Math.cos(ang), ey = y2 - 17 * Math.sin(ang);
  lines += `<path d="M${x1} ${y1}L${ex} ${ey}" stroke="#d2d2d2" stroke-width="1"/><path transform="translate(${ex} ${ey}) rotate(${ang * 180 / Math.PI})" d="M0 0L-6.500-2.700V2.700Z" fill="#ccc"/>`;
  if (!t) continue;
  const cx = (x1 + x2) / 2 - 4.8;
  tags += `<rect x="${cx - w / 2 - 2.7}" y="${y - 7}" width="${w + 5.4}" height="14" fill="#f4f4f4"/><text x="${cx - w / 2}" y="${y + 4}" textLength="${w}">${t}</text>`;
}
for (const [x, y, kind, t, w] of Object.values(nodes)) {
  const dy = kind === 'computer' || x > 1700 ? 1.3 : .6;
  labels += `<rect x="${x + 12}" y="${y - 6.600 + dy}" width="${w + 10.5}" height="14.500" fill="#f4f4f4"/><text x="${x + 19.8}" y="${y + 4.400 + dy}" textLength="${w}">${t}</text>`;
  discs += `<g transform="translate(${x} ${y})"><circle r="16.200" fill="${fills[kind]}" stroke="#1c1c22" stroke-width="1.900"/>${glyphs[kind]}</g>`;
}
discs += '<g transform="translate(169.200 710.300)"><circle r="6.600" fill="#111" stroke="#fff" stroke-width=".5"/><path d="M-3.200-.8C-3.200-4.500 3.200-4.500 3.200-.8Q3.200.8 2 1.500V3.200H-2V1.500Q-3.200.8-3.200-.8Z" fill="#fff"/><circle cx="-1.300" cy="-.5" r=".9"/><circle cx="1.300" cy="-.5" r=".9"/></g>';
document.getElementById('graph').innerHTML = lines + tags + labels + discs;
```
